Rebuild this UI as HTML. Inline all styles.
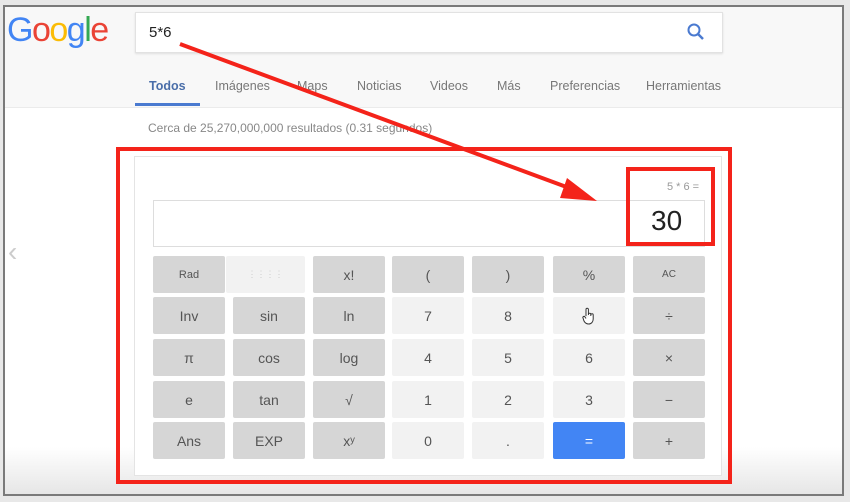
<!DOCTYPE html>
<html><head><meta charset="utf-8"><style>
*{margin:0;padding:0;box-sizing:border-box}
body{width:850px;height:502px;background:#e8e8e8;position:relative;overflow:hidden;font-family:"Liberation Sans",Arial,sans-serif}
.abs{position:absolute}
#frame{left:3px;top:5px;width:841px;height:491px;border:2px solid #7a7a7a;background:linear-gradient(#fff 0,#fff 440px,#e6e6e6 100%)}
#hdr{left:5px;top:7px;width:837px;height:101px;background:#f8f8f8;border-bottom:1px solid #ebebeb}
.b{position:absolute;width:72px;height:37px;background:#d6d6d6;color:#555;font-size:14px;display:flex;align-items:center;justify-content:center;border-radius:2px}
.l{background:#f2f2f2;color:#555}
.tab{position:absolute;top:79px;font-size:12.5px;color:#777}
</style></head><body>
<div id="frame" class="abs"></div>
<div id="hdr" class="abs"></div>
<div class="abs" style="left:7px;top:11px;font-size:34px;letter-spacing:-1.5px;font-family:'Liberation Sans',sans-serif"><span style="color:#4285f4">G</span><span style="color:#ea4335">o</span><span style="color:#fbbc05">o</span><span style="color:#4285f4">g</span><span style="color:#34a853">l</span><span style="color:#ea4335">e</span></div>
<div class="abs" style="left:135px;top:12px;width:588px;height:41px;background:#fff;border:1px solid #e2e2e2;box-shadow:0 1px 2px rgba(0,0,0,.1)"></div>
<div class="abs" style="left:149px;top:24px;font-size:15px;color:#222">5*6</div>
<svg class="abs" style="left:686px;top:22px" width="20" height="20" viewBox="0 0 20 20"><circle cx="8" cy="8" r="5.5" fill="none" stroke="#4a7ad0" stroke-width="2"/><path d="M12 12l5 5" stroke="#4a7ad0" stroke-width="2.5"/></svg>
<div class="tab" style="left:149px;color:#4a6ea9;font-weight:bold">Todos</div>
<div class="abs" style="left:135px;top:103px;width:65px;height:3px;background:#4a7ad0"></div>
<div class="tab" style="left:215px">Imágenes</div>
<div class="tab" style="left:297px">Maps</div>
<div class="tab" style="left:357px">Noticias</div>
<div class="tab" style="left:430px">Videos</div>
<div class="tab" style="left:497px">Más</div>
<div class="tab" style="left:550px">Preferencias</div>
<div class="tab" style="left:646px">Herramientas</div>
<div class="abs" style="left:148px;top:121px;font-size:12px;color:#888">Cerca de 25,270,000,000 resultados (0.31 segundos)</div>
<div class="abs" style="left:134px;top:156px;width:588px;height:320px;border:1px solid #e4e4e4;background:#fff"></div>
<div class="abs" style="left:153px;top:200px;width:552px;height:47px;border:1px solid #ddd"></div>
<div class="abs" style="left:667px;top:181px;font-size:11px;color:#999">5 * 6 =</div>
<div class="abs" style="left:651px;top:205px;font-size:28px;color:#222">30</div>
<div class="abs" style="left:8px;top:236px;font-size:28px;color:#ccc">‹</div>

<div class="b" style="left:153px;top:256px;font-size:11px">Rad</div>
<div class="b l" style="left:226px;top:256px;width:79px;color:#ccc;font-size:9px">⋮⋮⋮⋮</div>
<div class="b" style="left:313px;top:256px">x!</div>
<div class="b" style="left:392px;top:256px">(</div>
<div class="b" style="left:472px;top:256px">)</div>
<div class="b" style="left:553px;top:256px">%</div>
<div class="b" style="left:633px;top:256px;font-size:10px">AC</div>

<div class="b" style="left:153px;top:297px">Inv</div>
<div class="b" style="left:233px;top:297px">sin</div>
<div class="b" style="left:313px;top:297px">ln</div>
<div class="b l" style="left:392px;top:297px">7</div>
<div class="b l" style="left:472px;top:297px">8</div>
<div class="b l" style="left:553px;top:297px"><svg width="14" height="18" viewBox="0 0 14 18"><path d="M4 9V2.5a1.2 1.2 0 0 1 2.4 0V8M6.4 7.5a1.2 1.2 0 0 1 2.4 0V9M8.8 8a1.2 1.2 0 0 1 2.4 0v4c0 3-2 5-4.5 5S3 16 2 14L1 11a1.1 1.1 0 0 1 2-1l1 1.5" fill="#fff" stroke="#333" stroke-width="1"/></svg></div>
<div class="b" style="left:633px;top:297px">÷</div>

<div class="b" style="left:153px;top:339px">π</div>
<div class="b" style="left:233px;top:339px">cos</div>
<div class="b" style="left:313px;top:339px">log</div>
<div class="b l" style="left:392px;top:339px">4</div>
<div class="b l" style="left:472px;top:339px">5</div>
<div class="b l" style="left:553px;top:339px">6</div>
<div class="b" style="left:633px;top:339px">×</div>

<div class="b" style="left:153px;top:381px">e</div>
<div class="b" style="left:233px;top:381px">tan</div>
<div class="b" style="left:313px;top:381px">√</div>
<div class="b l" style="left:392px;top:381px">1</div>
<div class="b l" style="left:472px;top:381px">2</div>
<div class="b l" style="left:553px;top:381px">3</div>
<div class="b" style="left:633px;top:381px">−</div>

<div class="b" style="left:153px;top:422px">Ans</div>
<div class="b" style="left:233px;top:422px">EXP</div>
<div class="b" style="left:313px;top:422px">xʸ</div>
<div class="b l" style="left:392px;top:422px">0</div>
<div class="b l" style="left:472px;top:422px">.</div>
<div class="b" style="left:553px;top:422px;background:#4285f4;color:#fff">=</div>
<div class="b" style="left:633px;top:422px">+</div>

<div class="abs" style="left:116px;top:147px;width:616px;height:337px;border:4px solid #f4231a"></div>
<div class="abs" style="left:626px;top:167px;width:89px;height:79px;border:4px solid #f4231a"></div>
<svg class="abs" style="left:0;top:0" width="850" height="502"><path d="M180 44L580 192" stroke="#f4231a" stroke-width="4"/><path d="M597 201L567 178L560 198Z" fill="#f4231a"/></svg>
</body></html>
